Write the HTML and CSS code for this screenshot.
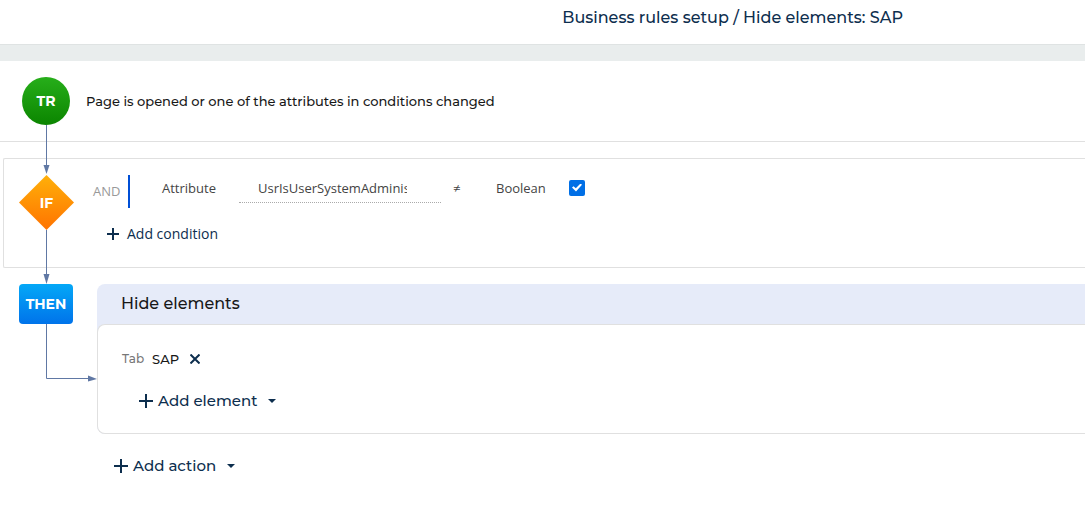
FILE: index.html
```html
<!DOCTYPE html>
<html lang="en">
  <head>
    <meta charset="UTF-8" />
    <meta name="viewport" content="width=device-width, initial-scale=1.0" />
    <title>Business rules setup</title>
    <link rel="stylesheet" href="styles.css">
  </head>
  <body>
    <header class="page-header">
      <h1 class="page-title">Business rules setup / Hide elements: SAP</h1>
    </header>
    <main class="rule">
      <div class="rail">
        <div class="node node-trigger">TR</div>
        <svg class="connector" width="8" height="50" viewBox="0 0 8 50">
          <path d="M4.5 0V44" stroke="#6078a4" fill="none" />
          <path d="M1.5 40H7.5L4.5 49Z" fill="#6078a4" />
        </svg>
        <div class="node node-if">IF</div>
        <svg class="connector" width="8" height="54" viewBox="0 0 8 54">
          <path d="M4.5 0V48" stroke="#6078a4" fill="none" />
          <path d="M1.5 44H7.5L4.5 54Z" fill="#6078a4" />
        </svg>
        <div class="node node-then">THEN</div>
        <svg class="connector-elbow" width="51" height="58" viewBox="0 0 51 58">
          <path d="M0.5 0V54.5H44" stroke="#6078a4" fill="none" />
          <path d="M42 51.5V57.5L51 55Z" fill="#6078a4" />
        </svg>
      </div>
      <div class="steps">
        <section class="trigger">
          <p>Page is opened or one of the attributes in conditions changed</p>
        </section>
        <section class="conditions">
          <div class="condition">
            <span class="logic">AND</span>
            <label class="attribute-label" for="attribute">Attribute</label>
            <input class="attribute-input" id="attribute" type="text" value="UsrIsUserSystemAdministrator" />
            <span class="operator">≠</span>
            <label class="value-label" for="value">Boolean</label>
            <input class="value-check" id="value" type="checkbox" checked />
          </div>
          <button class="add-button add-condition" type="button">
            <svg width="12" height="12" viewBox="0 0 12 12"><path d="M6 0V12M0 6H12" /></svg>
            Add condition
          </button>
        </section>
        <section class="actions">
          <div class="action">
            <h2 class="action-title">Hide elements</h2>
            <div class="action-body">
              <div class="element">
                <span class="element-type">Tab</span>
                <span>SAP</span>
                <button class="remove-button" type="button" aria-label="Remove SAP">
                  <svg width="10" height="10" viewBox="0 0 10 10"><path d="M0.5 0.5L9.5 9.5M9.5 0.5L0.5 9.5" /></svg>
                </button>
              </div>
              <button class="add-button add-element" type="button">
                <svg width="14" height="14" viewBox="0 0 14 14"><path d="M7 0V14M0 7H14" /></svg>
                Add element
                <span class="caret"></span>
              </button>
            </div>
          </div>
          <button class="add-button add-action" type="button">
            <svg width="14" height="14" viewBox="0 0 14 14"><path d="M7 0V14M0 7H14" /></svg>
            Add action
            <span class="caret"></span>
          </button>
        </section>
      </div>
    </main>
  </body>
</html>
```
FILE: styles.css
```css
* {
  box-sizing: border-box;
}
body {
  margin: 0;
  background: #fff;
  color: #181818;
  font-family: Montserrat, Inter, sans-serif;
  font-size: 13px;
  font-weight: 500;
  line-height: 20px;
}
h1,
h2,
p {
  margin: 0;
  font-weight: 500;
}
button {
  padding: 0;
  border: none;
  background: none;
  color: #0d2e4e;
  font: inherit;
  cursor: pointer;
}
svg {
  flex: none;
}
.page-header {
  padding: 8px 182px 16px;
  border-bottom: 1px solid #dfe3e3;
  text-align: right;
}
.page-title {
  color: #0d2e4e;
  font-size: 16px;
  line-height: 20px;
}
.rule {
  display: grid;
  border-top: 16px solid #e9eded;
}

/* flow nodes, laid over the left edge of the steps */
.rail,
.steps {
  grid-area: 1 / 1;
}
.rail {
  display: flex;
  flex-direction: column;
  align-items: center;
  justify-self: start;
  z-index: 1;
  width: 54px;
  margin: 16px 0 0 19px;
}
.node {
  display: flex;
  align-items: center;
  justify-content: center;
  color: #fff;
  font-size: 14px;
  font-weight: 700;
}
.node-trigger {
  width: 48px;
  height: 48px;
  border-radius: 50%;
  background: linear-gradient(#27ae1a, #0b8500);
}
.node-if {
  align-self: flex-start;
  width: 55px;
  height: 55px;
  background: linear-gradient(#ffb009, #ff7300);
  clip-path: polygon(50% 0, 100% 50%, 50% 100%, 0 50%);
}
.node-then {
  width: 54px;
  height: 40px;
  border-radius: 4px;
  background: linear-gradient(#04a8f7, #0073ea);
}
.connector {
  display: block;
}
.connector-elbow {
  align-self: flex-start;
  margin-left: 27px;
}

.trigger {
  padding: 30px 86px;
  border-bottom: 1px solid #e0e0e0;
}
.conditions {
  margin: 16px 0 16px 3px;
  padding: 16px 0 23px 89px;
  border: 1px solid #e0e0e0;
  border-right: none;
  border-radius: 2px 0 0 2px;
  font-family: "Open Sans", sans-serif;
  font-weight: 400;
}
.condition {
  display: flex;
  align-items: center;
  height: 33px;
  color: #444;
}
.logic {
  width: 37px;
  border-right: 2px solid #004fd6;
  color: #999;
  line-height: 33px;
}
.attribute-label {
  width: 77px;
  margin-left: 32px;
  padding-bottom: 8px;
}
.attribute-input {
  width: 202px;
  height: 28px;
  margin-bottom: 6px;
  padding: 0 34px 0 19px;
  border: none;
  border-bottom: 1px dotted #aaa;
  background: none;
  color: #444;
  font: inherit;
}
.operator {
  width: 43px;
  margin-left: 12px;
  padding-bottom: 8px;
}
.value-label {
  width: 73px;
  padding-bottom: 8px;
}
.value-check {
  display: grid;
  place-items: center;
  appearance: none;
  width: 16px;
  height: 16px;
  margin: 0 0 8px;
  border-radius: 2px;
  background: #006fe6;
}
.value-check:checked::before {
  content: "";
  width: 10px;
  height: 8px;
  background: #fff;
  clip-path: polygon(0 50%, 15% 35%, 38% 60%, 85% 0, 100% 15%, 40% 100%);
}
.add-button {
  display: flex;
  align-items: center;
  gap: 5px;
  font-size: 15px;
}
.add-button path,
.remove-button path {
  fill: none;
  stroke: #0d2e4e;
  stroke-width: 2;
}
.add-condition {
  gap: 8px;
  margin: 16px 0 0 14px;
  font-size: 14px;
}
.caret {
  margin-left: 6px;
  border: 4px solid transparent;
  border-top-color: #0d2e4e;
  border-bottom: none;
}

.actions {
  padding-left: 97px;
}
.action {
  border-radius: 8px 0 0 8px;
  background: #e6ebf9;
}
.action-title {
  padding: 10px 24px;
  font-size: 16px;
}
.action-body {
  padding: 24px 24px 22px;
  border: 1px solid #e0e0e0;
  border-right: none;
  border-radius: 8px 0 0 8px;
  background: #fff;
}
.element {
  display: flex;
  align-items: center;
  gap: 8px;
}
.element-type {
  color: #777;
  font-size: 12px;
}
.remove-button {
  display: flex;
  margin-left: 3px;
}
.add-element {
  margin: 22px 0 0 17px;
}
.add-action {
  margin: 22px 0 0 17px;
}
```
